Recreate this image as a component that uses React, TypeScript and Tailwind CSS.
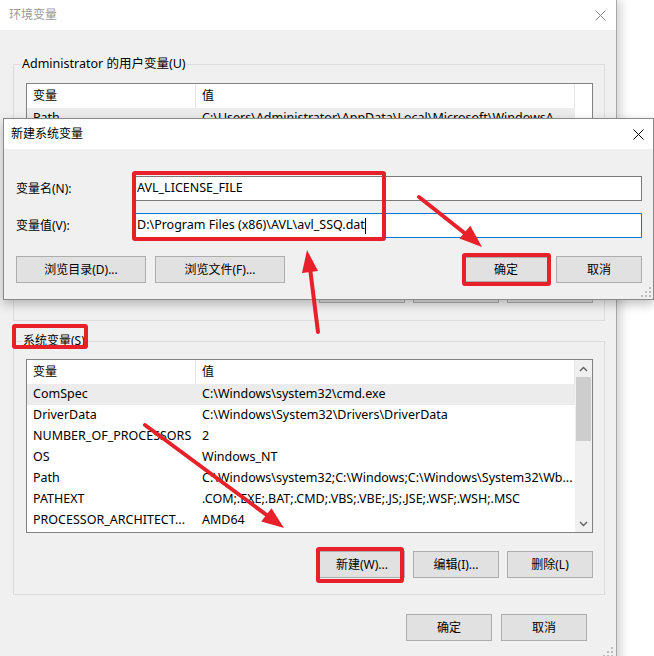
import React from "react";

const FONT = "font-['Noto_Sans','Noto_Sans_CJK_SC',sans-serif]";

function Btn({ children, w = "w-[86px]", extra = "" }: { children: React.ReactNode; w?: string; extra?: string }) {
  return (
    <div className={`h-[27px] ${w} flex items-center justify-center bg-[#e1e1e1] border border-[#adadad] text-[12px] text-black ${extra}`}>
      {children}
    </div>
  );
}

function CloseX({ color }: { color: string }) {
  return (
    <svg width="11" height="11" viewBox="0 0 11 11">
      <path d="M0.5 0.5 L10.5 10.5 M10.5 0.5 L0.5 10.5" stroke={color} strokeWidth="1" fill="none" />
    </svg>
  );
}

function Grip() {
  return (
    <svg width="10" height="10" viewBox="0 0 10 10">
      {[
        [8, 0],
        [4, 4],
        [8, 4],
        [0, 8],
        [4, 8],
        [8, 8],
      ].map(([x, y], i) => (
        <rect key={i} x={x} y={y} width="2" height="2" fill="#bdbdbd" />
      ))}
    </svg>
  );
}

const rows: [string, string][] = [
  ["ComSpec", "C:\\Windows\\system32\\cmd.exe"],
  ["DriverData", "C:\\Windows\\System32\\Drivers\\DriverData"],
  ["NUMBER_OF_PROCESSORS", "2"],
  ["OS", "Windows_NT"],
  ["Path", "C:\\Windows\\system32;C:\\Windows;C:\\Windows\\System32\\Wb..."],
  ["PATHEXT", ".COM;.EXE;.BAT;.CMD;.VBS;.VBE;.JS;.JSE;.WSF;.WSH;.MSC"],
  ["PROCESSOR_ARCHITECT...", "AMD64"],
];

function ListHeader() {
  return (
    <div className="flex h-[24px] bg-white">
      <div className="w-[169px] pl-[6px] flex items-center border-r border-[#e5e5e5]">变量</div>
      <div className="flex-1 pl-[6px] flex items-center border-r border-[#e5e5e5]">值</div>
    </div>
  );
}

export default function App() {
  return (
    <div className={`relative w-[654px] h-[656px] bg-white overflow-hidden text-[12px] text-black ${FONT}`}>
      {/* Background window */}
      <div className="w-[617px] h-[670px] bg-[#f0f0f0] border-r border-[#a8a8a8] shadow-[4px_0_10px_rgba(0,0,0,0.18)] flex flex-col">
        <div className="h-[30px] bg-white flex items-center justify-between pl-[9px] pr-[10px] shrink-0">
          <span className="text-[#9a9a9a]">环境变量</span>
          <CloseX color="#8a8a8a" />
        </div>
        <div className="pt-[26px] flex flex-col">
          {/* User variables */}
          <fieldset className="ml-[13px] w-[592px] border border-[#dcdcdc] pl-[12px] pr-[11px] pt-[11px] pb-[17px]">
            <legend className="ml-[-5px] px-[1px] h-[16px] leading-[16px] text-[12.5px]">Administrator 的用户变量(U)</legend>
            <div className="h-[176px] border border-[#828282] bg-white flex">
              <div className="flex-1 flex flex-col">
                <ListHeader />
                <div className="flex h-[21px] bg-[#ececec] text-[12.5px]">
                  <div className="w-[169px] pl-[6px] flex items-center">Path</div>
                  <div className="flex-1 pl-[6px] flex items-center whitespace-nowrap overflow-hidden">C:\Users\Administrator\AppData\Local\Microsoft\WindowsA...</div>
                </div>
              </div>
              <div className="w-[17px] bg-white" />
            </div>
            <div className="mt-[17px] flex justify-end gap-[8px]">
              <Btn>新建(N)...</Btn>
              <Btn>编辑(E)...</Btn>
              <Btn>删除(D)</Btn>
            </div>
          </fieldset>

          {/* System variables */}
          <fieldset className="mt-[12px] ml-[13px] w-[592px] border border-[#dcdcdc] pl-[12px] pr-[11px] pt-[10px] pb-[16px]">
            <legend className="ml-[-4px] px-[1px] h-[16px] leading-[16px]">系统变量(S)</legend>
            <div className="h-[174px] border border-[#828282] bg-white flex">
              <div className="flex-1 flex flex-col">
                <ListHeader />
                {rows.map(([k, v], i) => (
                  <div key={k} className={`flex h-[21px] text-[12.5px] ${i === 0 ? "bg-[#ececec]" : "bg-white"}`}>
                    <div className="w-[169px] pl-[6px] flex items-center whitespace-nowrap overflow-hidden">{k}</div>
                    <div className="flex-1 pl-[6px] flex items-center whitespace-nowrap overflow-hidden">{v}</div>
                  </div>
                ))}
              </div>
              <div className="w-[17px] bg-[#f0f0f0] flex flex-col items-center">
                <div className="h-[17px] flex items-center justify-center">
                  <svg width="9" height="6" viewBox="0 0 9 6"><path d="M1 5 L4.5 1.5 L8 5" stroke="#606060" strokeWidth="1.4" fill="none" /></svg>
                </div>
                <div className="w-[15px] h-[64px] bg-[#cdcdcd]" />
                <div className="flex-1" />
                <div className="h-[17px] flex items-center justify-center">
                  <svg width="9" height="6" viewBox="0 0 9 6"><path d="M1 1 L4.5 4.5 L8 1" stroke="#606060" strokeWidth="1.4" fill="none" /></svg>
                </div>
              </div>
            </div>
            <div className="mt-[18px] flex justify-end gap-[8px]">
              <Btn>新建(W)...</Btn>
              <Btn>编辑(I)...</Btn>
              <Btn>删除(L)</Btn>
            </div>
          </fieldset>

          <div className="mt-[19px] flex justify-end gap-[9px] pr-[29px]">
            <Btn>确定</Btn>
            <Btn>取消</Btn>
          </div>
          <div className="flex justify-end pr-[3px] mt-[6px]">
            <Grip />
          </div>
        </div>
      </div>

      {/* Dialog: 新建系统变量 */}
      <div className="absolute left-[3px] top-[118px] w-[651px] h-[182px] border border-[#8a8a8a] bg-[#f0f0f0] shadow-[0_4px_10px_rgba(0,0,0,0.25)] flex flex-col">
        <div className="h-[30px] bg-white flex items-center justify-between pl-[7px] pr-[9px] shrink-0">
          <span>新建系统变量</span>
          <CloseX color="#000" />
        </div>
        <div className="flex-1 flex flex-col pl-[12px] pr-[11px] pt-[27px] relative">
          <div className="flex items-center h-[25px]">
            <div className="w-[117px]">变量名(N):</div>
            <div className="flex-1 h-[25px] border border-[#7a7a7a] bg-white flex items-center pl-[3px] text-[12.5px]">AVL_LICENSE_FILE</div>
          </div>
          <div className="flex items-center h-[25px] mt-[12px]">
            <div className="w-[117px]">变量值(V):</div>
            <div className="flex-1 h-[25px] border border-[#0078d7] bg-white flex items-center pl-[3px] text-[12.5px]">
              <span>D:\Program Files (x86)\AVL\avl_SSQ.dat</span>
              <span className="inline-block w-[1px] h-[16px] bg-black" />
            </div>
          </div>
          <div className="mt-[18px] flex items-center">
            <Btn w="w-[130px]">浏览目录(D)...</Btn>
            <div className="ml-[9px]">
              <Btn w="w-[130px]">浏览文件(F)...</Btn>
            </div>
            <div className="flex-1" />
            <Btn extra="border-[#0078d7] border-2">确定</Btn>
            <div className="ml-[7px]">
              <Btn>取消</Btn>
            </div>
          </div>
          <div className="absolute right-[2px] bottom-[2px]">
            <Grip />
          </div>
        </div>
      </div>

      {/* Red annotation boxes */}
      <div className="absolute left-[132px] top-[171px] w-[254px] h-[70px] border-[4px] border-[#e8202a] rounded-[3px]" />
      <div className="absolute left-[462px] top-[253px] w-[89px] h-[33px] border-[4px] border-[#e8202a] rounded-[3px]" />
      <div className="absolute left-[12px] top-[324px] w-[76px] h-[25px] border-[4px] border-[#e8202a] rounded-[3px]" />
      <div className="absolute left-[316px] top-[547px] w-[88px] h-[36px] border-[4px] border-[#e8202a] rounded-[3px]" />

      {/* Red arrows */}
      <svg className="absolute left-0 top-0 pointer-events-none" width="654" height="656" viewBox="0 0 654 656">
        <g stroke="#e8202a" strokeWidth="4" strokeLinecap="round" fill="none">
          <line x1="419" y1="197" x2="467" y2="235" />
          <line x1="318" y1="332" x2="310" y2="268" />
          <line x1="145" y1="425" x2="268" y2="516" />
        </g>
        <g fill="#e8202a">
          <polygon points="482,247 459.5,238.5 470.3,225.7" />
          <polygon points="307,250 318,271 302,273" />
          <polygon points="284,528 261.2,521.5 271.5,508.3" />
        </g>
      </svg>
    </div>
  );
}
